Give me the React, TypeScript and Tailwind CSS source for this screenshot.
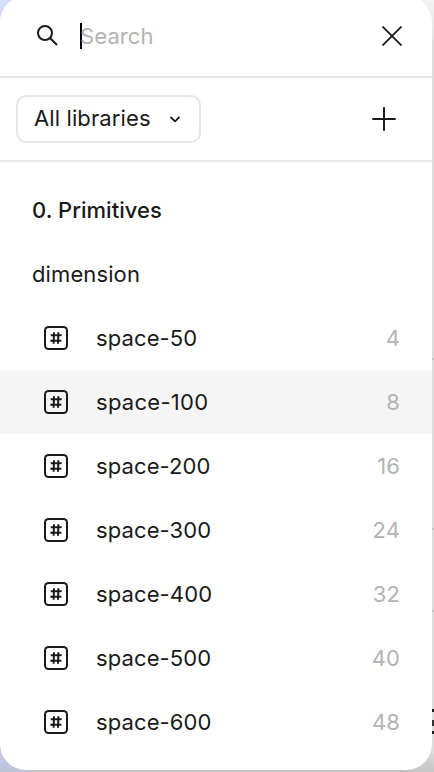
const variables = [
  { name: 'space-50', value: 4 },
  { name: 'space-100', value: 8, active: true },
  { name: 'space-200', value: 16 },
  { name: 'space-300', value: 24 },
  { name: 'space-400', value: 32 },
  { name: 'space-500', value: 40 },
  { name: 'space-600', value: 48 },
];

function NumberIcon() {
  return (
    <svg className="size-6 shrink-0" viewBox="0 0 24 24" fill="none" stroke="#1a1a1a" strokeWidth="2">
      <rect x="1" y="1" width="22" height="22" rx="3.5" />
      <path d="M10 6.3 9.6 17.7M14.4 6.3 14 17.7M6.7 9.3H17.7M6.3 14.7H17.3" />
    </svg>
  );
}

export default function App() {
  return (
    <div className="relative h-[772px] w-[434px] overflow-hidden bg-[#dcdcdc] font-['Inter',sans-serif] text-[22px] leading-8 tracking-[0.11px] text-[#1a1a1a]">
      <div className="absolute left-0 top-0 h-10 w-8 bg-[#d3dcfb]" />
      <div className="absolute right-0 top-0 h-10 w-8 bg-linear-to-b from-[#f3f3f3] to-[#e3e3e3]" />
      <div className="absolute bottom-0 left-0 h-10 w-8 bg-linear-to-b from-[#c7d0f2] to-[#bdc3da]" />
      <div className="absolute bottom-0 left-8 h-[2px] w-[376px] bg-[#c2c2c2]" />
      <div className="absolute bottom-0 right-0 h-[18px] w-8 bg-linear-to-b from-[#d6d6d6] to-[#c6c6c6]" />
      <div className="absolute right-0 top-[358px] h-[2px] w-[2px] bg-[#c4c4c4]" />
      <div className="absolute right-0 top-[528px] h-[2px] w-[2px] bg-[#c4c4c4]" />
      <div className="absolute right-0 top-[610px] h-[2px] w-[2px] bg-[#c4c4c4]" />
      <div className="absolute right-0 top-[709px] h-[3px] w-[2px] bg-[#1a1a1a]" />
      <div className="absolute right-0 top-[720px] h-[6px] w-[2px] bg-[#333]" />
      <div className="absolute right-0 top-[731px] h-[3px] w-[2px] bg-[#1a1a1a]" />

      <div className="relative -mt-1 flex h-[774px] w-[432px] flex-col overflow-hidden rounded-[26px] bg-white pt-1">
        <header className="flex h-[78px] shrink-0 items-center border-b-2 border-[#e6e6e6] pb-1 pl-9 pr-[30px]">
          <svg className="size-6" viewBox="0 0 24 24" fill="none" stroke="#1a1a1a" strokeWidth="2">
            <circle cx="9" cy="9" r="7" />
            <path d="m14 14 7 7" />
          </svg>
          <div className="ml-5 h-[26px] w-[2px] bg-black" />
          <span className="-ml-[2px] text-[#b3b3b3]">Search</span>
          <svg className="ml-auto size-5" viewBox="0 0 20 20" fill="none" stroke="#1a1a1a" strokeWidth="1.8">
            <path d="m.5.5 19 19m0-19-19 19" />
          </svg>
        </header>

        <div className="flex h-[84px] shrink-0 items-center justify-between border-b-2 border-[#e6e6e6] pl-4 pr-9">
          <button className="flex h-12 w-[185px] items-center rounded-[10px] border-2 border-[#e6e6e6] pb-[2px] pl-4">
            All libraries
            <svg className="ml-[18px] mt-[2px] size-3" viewBox="0 0 12 12" fill="none" stroke="#1a1a1a" strokeWidth="1.8">
              <path d="m1.5 4 4.5 4.3L10.5 4" />
            </svg>
          </button>
          <svg className="size-6" viewBox="0 0 24 24" fill="none" stroke="#1a1a1a" strokeWidth="2">
            <path d="M12 .3v23.4M.3 12h23.4" />
          </svg>
        </div>

        <h2 className="ml-8 mt-8 h-8 shrink-0 font-medium tracking-[0.03px]">0. Primitives</h2>
        <h3 className="ml-8 mt-8 h-8 shrink-0">dimension</h3>
        <ul className="mt-4">
          {variables.map((v) => (
            <li key={v.name} className={`flex h-16 items-center pl-11 pr-8 ${v.active ? 'bg-[#f5f5f5]' : ''}`}>
              <NumberIcon />
              <span className={`ml-7 ${v.active ? 'tracking-[0.28px]' : ''}`}>{v.name}</span>
              <span className="ml-auto text-[#b3b3b3]">{v.value}</span>
            </li>
          ))}
        </ul>
      </div>
    </div>
  );
}
